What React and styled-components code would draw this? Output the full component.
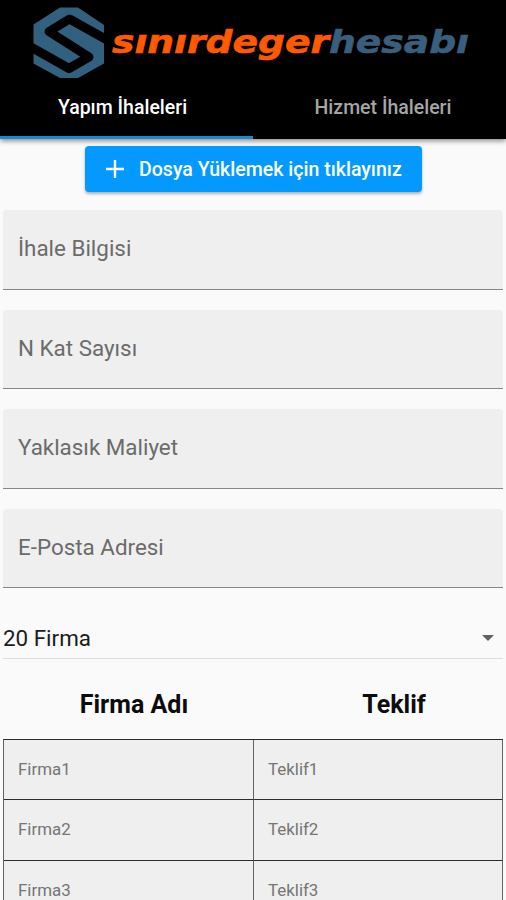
import React, { useState } from 'react';
import styled, { createGlobalStyle } from 'styled-components';

const GlobalStyle = createGlobalStyle`
  * {
    box-sizing: border-box;
  }

  body {
    margin: 0;
    background: #fafafa;
    font-family: Roboto, 'Noto Sans', sans-serif;
  }
`;

const Page = styled.div`
  width: 100%;
  height: 900px;
  overflow: hidden;
`;

const Header = styled.header`
  display: flex;
  flex-direction: column;
  height: 139px;
  background: #000000;
  box-shadow: 0 2px 5px rgba(0, 0, 0, 0.45);
`;

const Brand = styled.div`
  display: flex;
  height: 84px;
`;

const Tabs = styled.nav`
  display: grid;
  grid-template-columns: 1fr 1fr;
  flex: 1;
`;

const Tab = styled.button`
  padding: ${({ $inset }) => $inset};
  border: none;
  border-bottom: 3px solid ${({ $active }) => ($active ? '#1689d1' : 'transparent')};
  background: transparent;
  color: ${({ $active }) => ($active ? '#ffffff' : '#a6a6a6')};
  font-family: inherit;
  font-size: 19.5px;
  font-weight: 500;
  white-space: nowrap;
  cursor: pointer;
`;

const UploadButton = styled.button`
  display: flex;
  align-items: center;
  width: 337px;
  height: 46px;
  margin: 7px auto 18px 85px;
  padding: 0 0 0 21px;
  gap: 15px;
  border: none;
  border-radius: 4px;
  background: #0399ff;
  box-shadow: 0 2px 3px rgba(0, 0, 0, 0.3);
  color: #ffffff;
  font-family: inherit;
  font-size: 19.55px;
  font-weight: 500;
  white-space: nowrap;
  cursor: pointer;
`;

const Fields = styled.div`
  display: flex;
  flex-direction: column;
  gap: 20px;
  padding: 0 3px;
`;

const Field = styled.input`
  width: 100%;
  height: 79.6px;
  padding: 0 15px 2px;
  border: none;
  border-bottom: 1px solid #868686;
  border-radius: 4px 4px 0 0;
  outline: none;
  background: #efefef;
  font-family: inherit;
  font-size: 22.4px;

  &::placeholder {
    color: #6b6b6b;
    opacity: 1;
  }
`;

const Dropdown = styled.div`
  display: flex;
  align-items: center;
  justify-content: space-between;
  height: 42px;
  margin: 28.6px 3px 0;
  padding: 2px 9px 0 0;
  border-bottom: 1px solid #dedede;
  color: #1c1c1c;
  font-size: 22.4px;
`;

const TableHead = styled.div`
  display: grid;
  grid-template-columns: 262px 258px;
  height: 80px;
  padding: 12px 3px 0;
  align-items: center;
  color: #0c0c0c;
  font-size: 25px;
  font-weight: 700;
  text-align: center;
`;

const Table = styled.div`
  display: grid;
  grid-template-columns: 250px 249px;
  grid-template-rows: 60px 61px 61px;
  width: 500px;
  margin-left: 3px;
  border-left: 1px solid #626262;
  border-top: 1px solid #2c2c2c;
`;

const Cell = styled.input`
  min-width: 0;
  padding: 0 14px 1px;
  border: none;
  border-right: 1px solid #626262;
  border-bottom: 1px solid #2c2c2c;
  border-radius: 0;
  outline: none;
  background: #efefef;
  font-family: inherit;
  font-size: 16.9px;

  &::placeholder {
    color: #757575;
    opacity: 1;
  }
`;

const Logo = () => (
  <svg width="506" height="84" viewBox="0 0 506 84">
    <path fill="#32617f" d="M60 7.500h18l26 17.500v38.500L78 78H60L33.500 63.500V24.500z" />
    <path
      fill="none"
      stroke="#000"
      strokeWidth="9"
      strokeLinejoin="round"
      d="M108 40.500L69.500 19 49 31.500 89 57 69 68.500 30 46.500"
    />
    <g
      fontFamily="DejaVu Sans, sans-serif"
      fontSize="32"
      fontWeight="700"
      fontStyle="italic"
      strokeWidth="0.6"
    >
      <text x="112" y="53" fill="#ff5a00" stroke="#ff5a00" textLength="217" lengthAdjust="spacingAndGlyphs">sınırdeger</text>
      <text x="329" y="53" fill="#395f7c" stroke="#395f7c" textLength="140" lengthAdjust="spacingAndGlyphs">hesabı</text>
    </g>
  </svg>
);

const fields = ['İhale Bilgisi', 'N Kat Sayısı', 'Yaklasık Maliyet', 'E-Posta Adresi'];
const rows = [1, 2, 3];

const App = () => {
  const [tab, setTab] = useState(0);

  return (
    <Page>
      <GlobalStyle />
      <Header>
        <Brand>
          <Logo />
        </Brand>
        <Tabs>
          <Tab $active={tab === 0} $inset="0 8px 6px 0" onClick={() => setTab(0)}>Yapım İhaleleri</Tab>
          <Tab $active={tab === 1} $inset="0 0 6px 7px" onClick={() => setTab(1)}>Hizmet İhaleleri</Tab>
        </Tabs>
      </Header>
      <UploadButton>
        <svg width="18" height="18" viewBox="0 0 18 18">
          <path d="M9 0v18M0 9h18" stroke="#fff" strokeWidth="2.4" />
        </svg>
        Dosya Yüklemek için tıklayınız
      </UploadButton>
      <Fields>
        {fields.map((label) => (
          <Field key={label} placeholder={label} />
        ))}
      </Fields>
      <Dropdown>
        20 Firma
        <svg width="12" height="6" viewBox="0 0 12 6">
          <path d="M0 0h12L6 6z" fill="#616161" />
        </svg>
      </Dropdown>
      <TableHead>
        <span>Firma Adı</span>
        <span>Teklif</span>
      </TableHead>
      <Table>
        {rows.map((n) => (
          <React.Fragment key={n}>
            <Cell placeholder={`Firma${n}`} />
            <Cell placeholder={`Teklif${n}`} />
          </React.Fragment>
        ))}
      </Table>
    </Page>
  );
};

export default App;
